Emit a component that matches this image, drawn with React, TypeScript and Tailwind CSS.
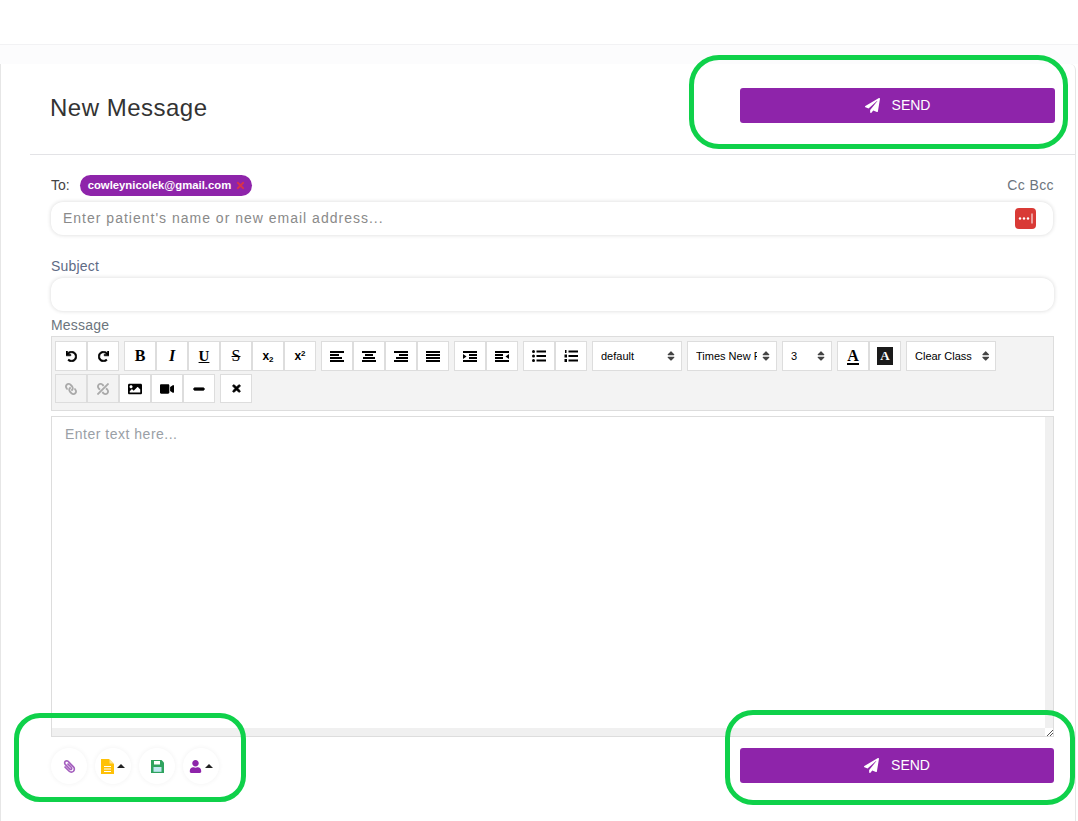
import React from 'react';
import {
  FaUndo, FaRedo, FaLink, FaUnlink, FaImage, FaVideo,
  FaMinus, FaTimes, FaPaperPlane, FaPaperclip, FaUser, FaSort,
} from 'react-icons/fa';

// Icônes de barres : [x, largeur] pour chaque ligne
const Bars = ({ rows }: { rows: [number, number][] }) => (
  <svg width="14" height="11" viewBox="0 0 14 11" fill="currentColor">
    {rows.map(([x, w], i) => (
      <rect key={i} x={x} y={i * 3} width={w} height="2" />
    ))}
  </svg>
);

const IndentIcon = ({ flip }: { flip?: boolean }) => (
  <svg width="14" height="11" viewBox="0 0 14 11" fill="currentColor" className={flip ? '-scale-x-100' : ''}>
    <rect x="0" y="0" width="14" height="2" />
    <rect x="6" y="3" width="8" height="2" />
    <rect x="6" y="6" width="8" height="2" />
    <rect x="0" y="9" width="14" height="2" />
    <path d="M0 3l3.5 2.5L0 8z" />
  </svg>
);

const ListIcon = ({ ordered }: { ordered?: boolean }) => (
  <svg width="14" height="12" viewBox="0 0 14 12" fill="currentColor">
    {ordered ? (
      <>
        <rect x="1" y="0" width="1.5" height="3" />
        <rect x="0.5" y="4.5" width="2.5" height="3" />
        <rect x="0.5" y="9" width="2.5" height="3" />
      </>
    ) : (
      <>
        <circle cx="1.5" cy="1.5" r="1.5" />
        <circle cx="1.5" cy="6" r="1.5" />
        <circle cx="1.5" cy="10.5" r="1.5" />
      </>
    )}
    <rect x="4.5" y="0.5" width="9.5" height="2" />
    <rect x="4.5" y="5" width="9.5" height="2" />
    <rect x="4.5" y="9.5" width="9.5" height="2" />
  </svg>
);

const CaretUp = () => (
  <svg width="8" height="4" viewBox="0 0 8 4" fill="#222">
    <path d="M0 4l4-4 4 4z" />
  </svg>
);

const ToolBtn = ({ children, disabled }: { children: React.ReactNode; disabled?: boolean }) => (
  <div
    className={`flex h-full w-[32px] items-center justify-center border border-[#dddddd] text-[13px] ${
      disabled ? 'bg-[#f3f3f3] text-[#aaaaaa]' : 'bg-white text-black'
    }`}
  >
    {children}
  </div>
);

const Group = ({ children }: { children: React.ReactNode }) => <div className="flex h-full">{children}</div>;

const SelectBox = ({ label, width, textWidth }: { label: string; width: string; textWidth: string }) => (
  <div className={`flex h-full items-center justify-between border border-[#dddddd] bg-white pl-[8px] pr-[4px] text-[11px] text-black ${width}`}>
    <span className={`overflow-hidden whitespace-nowrap ${textWidth}`}>{label}</span>
    <FaSort className="text-[12px] text-[#444]" />
  </div>
);

const SendButton = ({ width }: { width: string }) => (
  <button className={`flex h-[35px] items-center justify-center gap-[12px] rounded-[3px] bg-[#8e24aa] text-[14px] text-white ${width}`}>
    <FaPaperPlane className="text-[15px]" />
    SEND
  </button>
);

const RoundBtn = ({ children }: { children: React.ReactNode }) => (
  <div className="flex h-[36px] w-[36px] items-center justify-center gap-[3px] rounded-full bg-white shadow-[0_0_5px_rgba(0,0,0,0.06)]">
    {children}
  </div>
);

const fieldClass = 'flex items-center rounded-[12px] bg-white shadow-[0_0_4px_rgba(0,0,0,0.16)]';

export default function App() {
  return (
    <div className="relative h-[821px] w-[1078px] overflow-hidden bg-white font-['Liberation_Sans',Arial,sans-serif]">
      <div className="h-[45px] border-b border-[#f2f2f4] bg-white" />
      <div className="h-[19px] bg-[#fcfcfd]" />

      <div className="h-[757px] w-[1076px] rounded-tr-[6px] border-l border-r border-[#e6e6e6] bg-white">
        {/* En-tête */}
        <div className="ml-[29px] flex h-[91px] items-start justify-between border-b border-[#e3e3e6] pl-[20px] pr-[20px]">
          <h1 className="mt-[29px] text-[24px] leading-[30px] tracking-[0.5px] text-[#333333]">New Message</h1>
          <div className="mt-[24px]">
            <SendButton width="w-[315px]" />
          </div>
        </div>

        <div className="pl-[50px] pr-[21px]">
          {/* Destinataire */}
          <div className="flex h-[41px] items-end justify-between pt-[20px]">
            <div className="flex h-[21px] items-center gap-[10px]">
              <span className="text-[14px] text-[#444444]">To:</span>
              <span className="flex h-[21px] items-center gap-[4px] rounded-full bg-[#8e24aa] pl-[8px] pr-[6px] text-[11.3px] font-bold text-white">
                cowleynicolek@gmail.com
                <FaTimes className="text-[11px] text-[#d8334a]" />
              </span>
            </div>
            <span className="self-center text-[14px] tracking-[0.4px] text-[#6c757d]">Cc Bcc</span>
          </div>
          <div className={`${fieldClass} mr-[1px] mt-[6px] h-[33px] justify-between pl-[12px] pr-[17px]`}>
            <span className="text-[14px] tracking-[1px] text-[#8a8a8a]">Enter patient's name or new email address...</span>
            <div className="flex h-[21px] w-[21px] items-center justify-center rounded-[4px] bg-[#d93a36]">
              <svg width="17" height="11" viewBox="0 0 17 11" fill="#fff">
                <circle cx="3" cy="5.5" r="1.2" />
                <circle cx="7" cy="5.5" r="1.2" />
                <circle cx="11" cy="5.5" r="1.2" />
                <rect x="14.5" y="0.5" width="1" height="10" />
              </svg>
            </div>
          </div>

          {/* Objet */}
          <div className="mt-[23px] text-[14px] leading-[16px] tracking-[0.2px] text-[#5f6b85]">Subject</div>
          <div className={`${fieldClass} mt-[4px] h-[33px]`} />

          {/* Message */}
          <div className="mt-[6px] text-[14px] leading-[16px] tracking-[0.2px] text-[#6c757d]">Message</div>

          {/* Barre d'outils */}
          <div className="mt-[3px] h-[75px] border border-[#dddddd] bg-[#f3f3f3] pl-[3px] pt-[4px]">
            <div className="flex h-[30px] gap-[5px]">
              <Group>
                <ToolBtn><FaUndo className="text-[11px]" stroke="currentColor" strokeWidth={30} /></ToolBtn>
                <ToolBtn><FaRedo className="text-[11px]" stroke="currentColor" strokeWidth={30} /></ToolBtn>
              </Group>
              <Group>
                <ToolBtn><span className="font-['Liberation_Serif',serif] text-[16px] font-bold">B</span></ToolBtn>
                <ToolBtn><span className="font-['Liberation_Serif',serif] text-[16px] font-bold italic">I</span></ToolBtn>
                <ToolBtn><span className="font-['Liberation_Serif',serif] text-[15px] font-bold underline">U</span></ToolBtn>
                <ToolBtn><span className="font-['Liberation_Serif',serif] text-[16px] line-through">S</span></ToolBtn>
                <ToolBtn><span className="text-[12px] font-bold">x<sub className="text-[8px]">2</sub></span></ToolBtn>
                <ToolBtn><span className="text-[12px] font-bold">x<sup className="text-[8px]">2</sup></span></ToolBtn>
              </Group>
              <Group>
                <ToolBtn><Bars rows={[[0, 14], [0, 9], [0, 12], [0, 14]]} /></ToolBtn>
                <ToolBtn><Bars rows={[[0, 14], [3, 8], [1, 12], [0, 14]]} /></ToolBtn>
                <ToolBtn><Bars rows={[[0, 14], [5, 9], [2, 12], [0, 14]]} /></ToolBtn>
                <ToolBtn><Bars rows={[[0, 14], [0, 14], [0, 14], [0, 14]]} /></ToolBtn>
              </Group>
              <Group>
                <ToolBtn><IndentIcon /></ToolBtn>
                <ToolBtn><IndentIcon flip /></ToolBtn>
              </Group>
              <Group>
                <ToolBtn><ListIcon /></ToolBtn>
                <ToolBtn><ListIcon ordered /></ToolBtn>
              </Group>
              <SelectBox label="default" width="w-[90px]" textWidth="w-[60px]" />
              <SelectBox label="Times New Roman" width="w-[90px]" textWidth="w-[61px]" />
              <SelectBox label="3" width="w-[50px]" textWidth="w-[20px]" />
              <Group>
                <ToolBtn><span className="border-b-2 border-black font-['Liberation_Serif',serif] text-[16px] font-bold leading-[15px]">A</span></ToolBtn>
                <ToolBtn>
                  <span className="flex h-[18px] w-[16px] items-center justify-center bg-[#1a1a1a] font-['Liberation_Serif',serif] text-[13px] font-bold text-white">A</span>
                </ToolBtn>
              </Group>
              <SelectBox label="Clear Class" width="w-[90px]" textWidth="w-[68px]" />
            </div>
            <div className="mt-[3px] flex h-[29px] gap-[5px]">
              <Group>
                <ToolBtn disabled><FaLink className="-scale-x-100 text-[12px]" /></ToolBtn>
                <ToolBtn disabled><FaUnlink className="-scale-x-100 text-[12px]" /></ToolBtn>
                <ToolBtn><FaImage className="text-[14px]" /></ToolBtn>
                <ToolBtn><FaVideo className="text-[14px]" /></ToolBtn>
                <ToolBtn><FaMinus className="text-[12px]" stroke="currentColor" strokeWidth={40} /></ToolBtn>
              </Group>
              <Group>
                <ToolBtn><FaTimes className="text-[11px]" stroke="currentColor" strokeWidth={40} /></ToolBtn>
              </Group>
            </div>
          </div>

          {/* Zone de texte */}
          <div className="mt-[5px] flex h-[321px] flex-col border border-[#dddddd] bg-white">
            <div className="flex min-h-0 flex-1">
              <div className="flex-1 pl-[13px] pt-[7px] text-[14px] tracking-[0.5px] text-[#9aa0a6]">Enter text here...</div>
              <div className="w-[8px] bg-[#f0f0f0]" />
            </div>
            <div className="flex h-[8px] justify-end bg-[#f0f0f0]">
              <div className="flex w-[8px] items-end justify-end bg-white">
                <svg width="6" height="6" viewBox="0 0 6 6" stroke="#555" strokeWidth="1">
                  <path d="M0 6L6 0M3 6L6 3" />
                </svg>
              </div>
            </div>
          </div>

          {/* Pied */}
          <div className="mt-[11px] flex items-start justify-between">
            <div className="flex gap-[8px]">
              <RoundBtn><FaPaperclip className="-scale-x-100 text-[13px] text-[#a45fbe]" /></RoundBtn>
              <RoundBtn>
                <svg width="13" height="15" viewBox="0 0 13 15">
                  <path d="M0 0h8l5 5v10H0z" fill="#ffc107" />
                  <path d="M8.5 0l4.5 4.5H8.5z" fill="#ffe082" />
                  <path d="M3 7h7v1H3zM3 9.5h7v1H3zM3 12h7v1H3z" fill="#fff" />
                </svg>
                <CaretUp />
              </RoundBtn>
              <RoundBtn>
                <svg width="13" height="13" viewBox="0 0 13 13">
                  <path d="M0 0h10.5L13 2.5V13H0z" fill="#2fa35f" />
                  <rect x="3" y="1" width="6" height="3.5" fill="#fff" />
                  <rect x="2.5" y="7" width="8" height="4.8" fill="#bfe8f0" />
                </svg>
              </RoundBtn>
              <RoundBtn>
                <FaUser className="text-[13px] text-[#8e24aa]" />
                <CaretUp />
              </RoundBtn>
            </div>
            <SendButton width="w-[314px]" />
          </div>
        </div>
      </div>

      {/* Annotations vertes */}
      <div className="absolute left-[689px] top-[55px] h-[94px] w-[379px] rounded-[30px] border-[5px] border-[#0fd14a]" />
      <div className="absolute left-[14px] top-[713px] h-[89px] w-[232px] rounded-[26px] border-[5px] border-[#0fd14a]" />
      <div className="absolute left-[725px] top-[710px] h-[95px] w-[350px] rounded-[28px] border-[5px] border-[#0fd14a]" />
    </div>
  );
}
